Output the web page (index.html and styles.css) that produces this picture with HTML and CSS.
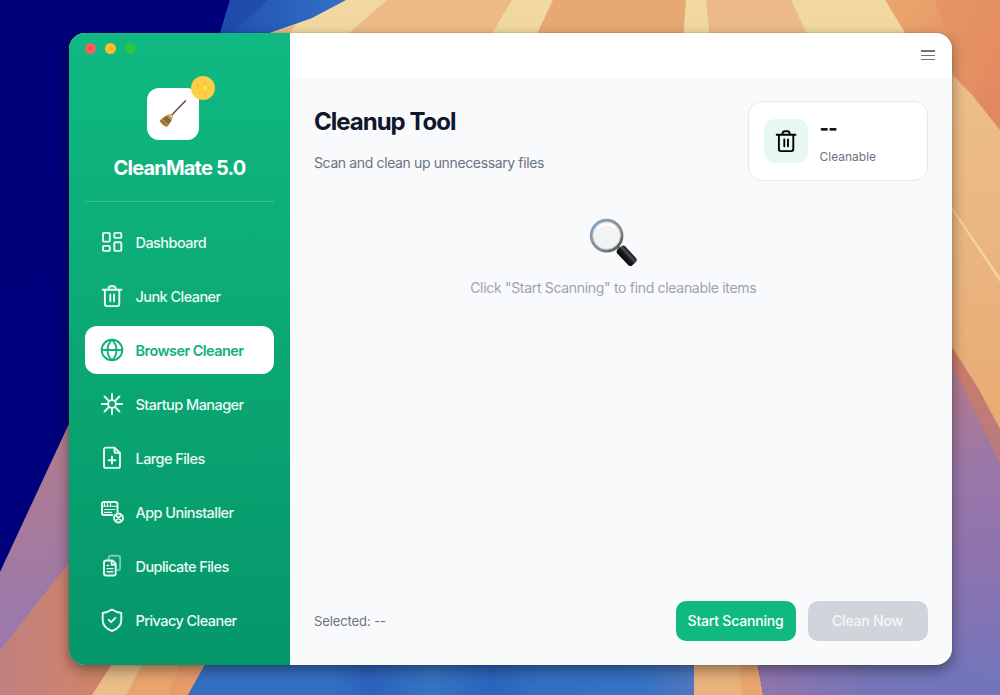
FILE: index.html
```html
<!DOCTYPE html>
<html lang="en">
<head>
    <meta charset="UTF-8">
    <meta name="viewport" content="width=device-width, initial-scale=1.0">
    <title>CleanMate 5.0</title>
    <link rel="stylesheet" href="styles.css">
</head>
<body>

<svg class="wallpaper" viewBox="0 0 1000 695" preserveAspectRatio="none" aria-hidden="true">
    <defs>
        <linearGradient id="navy" x1="0" y1="0" x2="1" y2="1"><stop offset="0" stop-color="#00007a"/><stop offset="1" stop-color="#000080"/></linearGradient>
        <linearGradient id="sky" x1="0" y1="0" x2="1" y2="0"><stop offset="0" stop-color="#1f50b0"/><stop offset="1" stop-color="#3470c6"/></linearGradient>
        <linearGradient id="mauve" x1="0" y1="0" x2="0" y2="1"><stop offset="0" stop-color="#b47d88"/><stop offset="1" stop-color="#9878b0"/></linearGradient>
        <linearGradient id="clay" x1="0" y1="0.4" x2="1" y2="0.4"><stop offset="0" stop-color="#c1807f"/><stop offset="1" stop-color="#d68562"/></linearGradient>
        <linearGradient id="lake" x1="0" y1="0" x2="1" y2="0"><stop offset="0" stop-color="#3370c2"/><stop offset="0.28" stop-color="#3370c4"/><stop offset="0.36" stop-color="#2c62bd"/><stop offset="0.48" stop-color="#3574c3"/><stop offset="0.6" stop-color="#2c64bd"/><stop offset="0.7" stop-color="#3370c2"/><stop offset="0.9" stop-color="#3572c3"/><stop offset="1" stop-color="#5276be"/></linearGradient>
        <linearGradient id="coral" x1="0" y1="0" x2="1" y2="0.6"><stop offset="0" stop-color="#e9a76e"/><stop offset="0.5" stop-color="#e89a68"/><stop offset="1" stop-color="#e08860"/></linearGradient>
        <linearGradient id="peach" x1="0" y1="0" x2="0" y2="1"><stop offset="0" stop-color="#ecbf8b"/><stop offset="1" stop-color="#e8aa72"/></linearGradient>
        <linearGradient id="rust" x1="0" y1="0" x2="1" y2="1"><stop offset="0" stop-color="#d37b5c"/><stop offset="1" stop-color="#b67c84"/></linearGradient>
        <linearGradient id="violet" x1="0" y1="0" x2="0" y2="1"><stop offset="0" stop-color="#bb7a7e"/><stop offset="0.35" stop-color="#9b77a8"/><stop offset="0.65" stop-color="#8d73b0"/><stop offset="1" stop-color="#6d76bc"/></linearGradient>
        <linearGradient id="plum" x1="0" y1="0" x2="1" y2="0"><stop offset="0" stop-color="#9275ac"/><stop offset="0.5" stop-color="#7375b8"/><stop offset="1" stop-color="#7175bb"/></linearGradient>
    </defs>
    <rect width="1000" height="695" fill="url(#navy)"/>
    <polygon points="230,0 348,0 270,40 218,40" fill="url(#sky)"/>
    <polygon points="230,0 268,0 226,38 218,40" fill="#1f4cab"/>
    <polygon points="346,0 1000,0 1000,40 262,40 270,33 312,18" fill="#f0d8a0"/>
    <polygon points="270,33 296,24 286,40 260,40" fill="#e8b98a"/>
    <polygon points="387,0 512,0 488,40 341,40" fill="#edba86"/>
    <polygon points="553,0 686,0 683,40 534,40" fill="#e8a871"/>
    <polygon points="706,0 791,0 810,40 710,40" fill="#ecba88"/>
    <polygon points="885,0 1000,0 1000,150 940,90" fill="url(#coral)"/>
    <polygon points="935,0 1000,0 1000,98 952,48" fill="#e58d60" opacity="0.6"/>
    <polygon points="940,64 952,74 973,96 1000,130 1000,450 940,350" fill="url(#peach)"/>
    <polygon points="940,196 952,207 1000,277 1000,282 952,210" fill="#f2d79c"/>
    <polygon points="940,330 952,347 978,388 1000,429 1000,480 940,380" fill="url(#rust)"/>
    <polygon points="940,342 952,362 1000,463 1000,695 940,695" fill="url(#violet)"/>
    <polygon points="80,400 0,572 0,655 80,560" fill="url(#mauve)"/>
    <polygon points="80,549 0,650 0,695 110,695 130,650 80,650" fill="url(#clay)"/>
    <polygon points="112,664 120,650 214,650 188,695 92,695" fill="#e7a46e"/>
    <polygon points="112,664 120,650 150,650 126,695 92,695" fill="#eabd8b"/>
    <polygon points="180,664 206,664 188,695 168,695" fill="#e79b69"/>
    <polygon points="213,650 694,650 694,695 188,695" fill="url(#lake)"/>
    <polygon points="694,650 755,650 763,695 694,695" fill="#e9b27d"/>
    <polygon points="738,650 755,650 763,695 742,695" fill="#e8a66e"/>
    <polygon points="755,650 940,650 1000,695 763,695" fill="url(#plum)"/>
</svg>

<div class="window">
    <aside class="sidebar">
        <div class="traffic-lights">
            <span class="light red"></span>
            <span class="light yellow"></span>
            <span class="light green"></span>
        </div>

        <div class="brand">
            <div class="logo">
                <svg class="broom" viewBox="0 0 28 28">
                    <path d="M26.3.9 12.5 15.2" stroke="#6f4439" stroke-width="1.5" stroke-linecap="round"/>
                    <path d="M10.6 14.1c1.3-.7 3.6 1.2 3 3-.4 2.900-2.500 6.700-5.700 9.900C5 26.200 1.800 23.600.5 20.700c2.600-2 6.300-5.600 10.100-6.600z" fill="#a98d3c"/>
                    <path d="M10.600 14.100c1.300-.7 3.600 1.200 3 3l-.6 1.900-4.400-3.700z" fill="#d8bf6c"/>
                    <path d="m6.300 16.700 5.400 4.800M4.600 18l5.500 5.300" stroke="#7b4d31" stroke-width="1.200"/>
                    <path d="m3 20.500 4.400 4.700M1.800 20.800l3.700 4.100" stroke="#796328" stroke-width=".8"/>
                </svg>
                <span class="badge">
                    <svg viewBox="0 0 24 24">
                        <path d="M14.200 5.500c.5 4.200 1.400 5.700 5.200 6.500-3.800.8-4.700 2.300-5.200 6.500-.5-4.200-1.400-5.700-5.200-6.500 3.800-.8 4.700-2.300 5.200-6.500z" fill="#ffdd45" stroke="#f3bb30" stroke-width=".7"/>
                        <path d="m7 6.500.6 2.100 1.700.6-1.700.6L7 12l-.6-2.200-1.700-.6 1.700-.6zM8.800 14l.5 1.700 1.500.5-1.500.5-.5 1.800-.5-1.800-1.500-.5 1.500-.5z" fill="#f6bb2c"/>
                    </svg>
                </span>
            </div>
            <h1 class="brand-name">CleanMate 5.0</h1>
        </div>

        <nav class="menu">
            <a class="menu-item">
                <svg class="icon" viewBox="0 0 24 24">
                    <rect x="3" y="2.900" width="6.800" height="8.700" rx="1"/>
                    <rect x="14.300" y="2.900" width="7" height="5" rx="1"/>
                    <rect x="3" y="15.900" width="6.800" height="5" rx="1"/>
                    <rect x="14.300" y="12.200" width="7" height="8.700" rx="1"/>
                </svg>
                <span>Dashboard</span>
            </a>
            <a class="menu-item">
                <svg class="icon" viewBox="0 0 24 24">
                    <path d="M2.700 5.700h18.800M4.900 5.700v14.400a2 2 0 0 0 2 2h10.400a2 2 0 0 0 2-2V5.700M8.200 5.500l.4-1.600a2.200 2.200 0 0 1 2.100-1.600h2.800a2.200 2.200 0 0 1 2.100 1.600l.4 1.600M10.300 10.500v6.700M14 10.500v6.700"/>
                </svg>
                <span>Junk Cleaner</span>
            </a>
            <a class="menu-item active">
                <svg class="icon" viewBox="0 0 24 24">
                    <circle cx="12" cy="12" r="10.300"/>
                    <path d="M1.700 12h20.600M12 1.700c-3 2.800-4.500 6.200-4.500 10.300s1.500 7.500 4.500 10.300c3-2.800 4.500-6.200 4.500-10.300S15 4.500 12 1.700z"/>
                </svg>
                <span>Browser Cleaner</span>
            </a>
            <a class="menu-item">
                <svg class="icon" viewBox="0 0 24 24">
                    <circle cx="12" cy="12" r="3.900"/>
                    <path d="M12 1.800v5.400M12 16.800v5.400M1.800 12h5.400M16.800 12h5.400M4.500 4.500l4 4M15.500 15.500l4 4M4.500 19.500l4-4M15.500 8.500l4-4"/>
                </svg>
                <span>Startup Manager</span>
            </a>
            <a class="menu-item">
                <svg class="icon" viewBox="0 0 24 24">
                    <path d="M14.500 1.600H6a2 2 0 0 0-2 2v16.300a2 2 0 0 0 2 2h12a2 2 0 0 0 2-2V7zM14.500 1.600v3.600c0 1 .6 1.700 1.700 1.700H20M12 10.800v6.800M8.600 14.200h6.800"/>
                </svg>
                <span>Large Files</span>
            </a>
            <a class="menu-item">
                <svg class="icon" viewBox="0 0 24 24">
                    <path d="M12.300 15H4a2 2 0 0 1-2-2V4a2 2 0 0 1 2-2h11.500a2 2 0 0 1 2 2v8"/>
                    <path class="thin" d="M2 6.200h15.500M4.500 2v3.800M7.500 2v3.800M10.500 2v3.800M4.600 9.500h10.300M4.600 12.400h7"/>
                    <circle cx="18.500" cy="18" r="4.500"/>
                    <path d="m16.300 15.800 4.400 4.400M20.700 15.800l-4.400 4.400"/>
                </svg>
                <span>App Uninstaller</span>
            </a>
            <a class="menu-item">
                <svg class="icon" viewBox="0 0 24 24">
                    <path class="faded" d="M8.600 5.500V3.700a2 2 0 0 1 2-2h7.500a2 2 0 0 1 2 2v10.400a2 2 0 0 1-2 2h-1.300"/>
                    <path d="M12.500 6.500H6a2 2 0 0 0-2 2v11a2 2 0 0 0 2 2h7.700a2 2 0 0 0 2-2V9.700zM11.600 6.800v4h4"/>
                    <path class="line" d="M7 14.600h6M7 17.800h6M7 11.500h1.500"/>
                </svg>
                <span>Duplicate Files</span>
            </a>
            <a class="menu-item">
                <svg class="icon" viewBox="0 0 24 24">
                    <path d="M12 1.500c3 2 6 3 9.300 3.500v7c0 5-3.800 9-9.300 11-5.500-2-9.300-6-9.300-11V5C6 4.500 9 3.500 12 1.500zM8.800 11.800l2.400 2.400 4.200-4.300"/>
                </svg>
                <span>Privacy Cleaner</span>
            </a>
        </nav>
    </aside>

    <main class="main">
        <header class="topbar">
            <button class="menu-button" aria-label="Menu"><i></i><i></i><i></i></button>
        </header>

        <section class="content">
            <div class="page-head">
                <div class="page-title">
                    <h2>Cleanup Tool</h2>
                    <p>Scan and clean up unnecessary files</p>
                </div>
                <div class="stat-card">
                    <div class="stat-icon">
                        <svg class="icon" viewBox="0 0 24 24">
                            <path d="M2.700 5.700h18.800M4.900 5.700v14.400a2 2 0 0 0 2 2h10.400a2 2 0 0 0 2-2V5.700M8.200 5.500l.4-1.600a2.200 2.200 0 0 1 2.100-1.600h2.800a2.200 2.200 0 0 1 2.100 1.600l.4 1.600M10.300 10.500v6.700M14 10.500v6.700"/>
                        </svg>
                    </div>
                    <div class="stat-text">
                        <strong>--</strong>
                        <span>Cleanable</span>
                    </div>
                </div>
            </div>

            <div class="empty-state">
                <svg class="magnifier" viewBox="0 0 48 48">
                    <defs>
                        <linearGradient id="rim" x1="0" y1="0" x2="1" y2="1"><stop offset="0" stop-color="#78a9de"/><stop offset="0.3" stop-color="#8b98a5"/><stop offset="0.65" stop-color="#85898d"/><stop offset="1" stop-color="#3e4144"/></linearGradient>
                        <linearGradient id="grip" x1="0" y1="1" x2="0" y2="0"><stop offset="0" stop-color="#050607"/><stop offset="0.5" stop-color="#1c1f22"/><stop offset="0.7" stop-color="#4c5054"/><stop offset="1" stop-color="#101214"/></linearGradient>
                    </defs>
                    <path d="m28.500 29 3 3" stroke="#777b7f" stroke-width="4"/>
                    <rect x="27" y="32.500" width="21.500" height="10.600" rx="3" fill="url(#grip)" transform="rotate(47 37.700 37.800)"/>
                    <circle cx="17.600" cy="17.600" r="15.400" fill="#f2f3f3" stroke="url(#rim)" stroke-width="2.900"/>
                    <circle cx="17.600" cy="17.600" r="13.700" fill="none" stroke="#c9cbcd" stroke-width=".8"/>
                    <path d="M9 10.500c4-5 12-5.500 16.500-1" fill="none" stroke="#fff" stroke-width="2" stroke-linecap="round"/>
                </svg>
                <p>Click "Start Scanning" to find cleanable items</p>
            </div>

            <footer class="actions">
                <span class="selected">Selected: --</span>
                <button class="btn btn-primary">Start Scanning</button>
                <button class="btn btn-disabled" disabled>Clean Now</button>
            </footer>
        </section>
    </main>
</div>

</body>
</html>
```
FILE: styles.css
```css
* {
    box-sizing: border-box;
}
body {
    font-family: Inter, "Liberation Sans", sans-serif;
    margin: 0;
    height: 695px;
    padding: 33px 48.5px 30px 69px;
    overflow: hidden;
}
h1, h2, p {
    margin: 0;
}
.wallpaper {
    position: absolute;
    top: 0;
    left: 0;
    width: 1000px;
    height: 695px;
}
.window {
    position: relative;
    display: flex;
    height: 631.5px;
    border-radius: 16px;
    overflow: hidden;
    background: #f9fafc;
    box-shadow: 0 0 1px rgba(0, 0, 0, 0.5), 0 5px 14px rgba(0, 0, 0, 0.4);
}
.sidebar {
    width: 221px;
    padding: 0 16px;
    background: linear-gradient(#10b981, #059669);
    color: #fff;
}
.traffic-lights {
    display: flex;
    gap: 9px;
    padding-top: 10px;
}
.light {
    width: 11px;
    height: 11px;
    border-radius: 50%;
}
.red {
    background: #ff5f57;
}
.yellow {
    background: #febc2e;
}
.green {
    background: #28c840;
}
.brand {
    display: flex;
    flex-direction: column;
    align-items: center;
    height: 148px;
    padding-top: 33.5px;
    border-bottom: 1px solid rgba(255, 255, 255, 0.2);
}
.logo {
    position: relative;
    display: flex;
    align-items: center;
    justify-content: center;
    width: 52px;
    height: 52px;
    margin-right: 14px;
    border-radius: 12px;
    background: #fff;
}
.broom {
    width: 28px;
    height: 28px;
    fill: none;
}
.badge {
    position: absolute;
    top: -12px;
    right: -16px;
    width: 24px;
    height: 24px;
    border-radius: 50%;
    background: #fccd46;
}
.brand-name {
    margin-top: 15px;
    font-size: 20px;
    line-height: 26px;
    font-weight: 700;
    letter-spacing: -0.8px;
    white-space: nowrap;
}
.menu {
    display: flex;
    flex-direction: column;
    gap: 6px;
    padding-top: 16px;
}
.menu-item {
    display: flex;
    align-items: center;
    gap: 12px;
    height: 48px;
    padding-left: 14.5px;
    border-radius: 12px;
    font-size: 14.5px;
    font-weight: 500;
    letter-spacing: -0.56px;
    color: #eafaf3;
}
.menu-item.active {
    background: #fff;
    color: #10b17a;
    font-weight: 600;
}
.icon {
    width: 24px;
    height: 24px;
    fill: none;
    stroke: currentColor;
    stroke-width: 1.9;
    stroke-linecap: round;
    stroke-linejoin: round;
}
.thin {
    stroke-width: 1.1;
}
.line {
    stroke-width: 1.4;
}
.faded {
    opacity: 0.5;
}
.main {
    flex: 1;
    display: flex;
    flex-direction: column;
}
.topbar {
    display: flex;
    align-items: center;
    justify-content: flex-end;
    height: 44.5px;
    padding-right: 17px;
    background: #fff;
}
.menu-button {
    display: flex;
    flex-direction: column;
    gap: 2.8px;
    width: 14px;
    padding: 0;
    border: none;
    background: none;
}
.menu-button i {
    height: 1.5px;
    background: #6b7280;
}
.content {
    flex: 1;
    display: flex;
    flex-direction: column;
    padding: 23.5px 24px 24px;
}
.page-head {
    display: flex;
    justify-content: space-between;
}
.page-title h2 {
    padding-top: 6px;
    font-size: 24px;
    line-height: 30px;
    font-weight: 700;
    letter-spacing: -1px;
    color: #0f172a;
}
.page-title p {
    padding-top: 16px;
    font-size: 14px;
    line-height: 20px;
    letter-spacing: -0.37px;
    color: #6b7280;
}
.stat-card {
    display: flex;
    align-items: center;
    gap: 12px;
    width: 180px;
    height: 80px;
    padding: 0 15px;
    border: 1px solid #e5e7eb;
    border-radius: 14px;
    background: #fff;
}
.stat-icon {
    display: flex;
    align-items: center;
    justify-content: center;
    width: 44px;
    height: 44px;
    border-radius: 11px;
    background: #e7f8f2;
    color: #000;
}
.stat-text {
    display: flex;
    flex-direction: column;
}
.stat-text strong {
    font-size: 20px;
    line-height: 30px;
    font-weight: 800;
    letter-spacing: -0.6px;
    color: #0f172a;
}
.stat-text span {
    font-size: 12px;
    line-height: 27px;
    color: #6b7280;
}
.empty-state {
    flex: 1;
    display: flex;
    flex-direction: column;
    align-items: center;
    padding: 37px 15px 0 0;
}
.magnifier {
    width: 48px;
    height: 48px;
}
.empty-state p {
    margin-top: 12px;
    font-size: 14px;
    line-height: 20px;
    letter-spacing: -0.31px;
    color: #9ca3af;
}
.actions {
    display: flex;
    align-items: center;
    gap: 12px;
}
.selected {
    flex: 1;
    font-size: 13px;
    letter-spacing: -0.1px;
    color: #6b7280;
}
.btn {
    width: 120px;
    height: 40px;
    padding: 0;
    border: none;
    border-radius: 10px;
    font-family: inherit;
    font-size: 14px;
    font-weight: 500;
    letter-spacing: -0.2px;
    color: #fff;
}
.btn-primary {
    background: #10b981;
}
.btn-disabled {
    background: #d1d5db;
    color: #f5f6f8;
}
```
